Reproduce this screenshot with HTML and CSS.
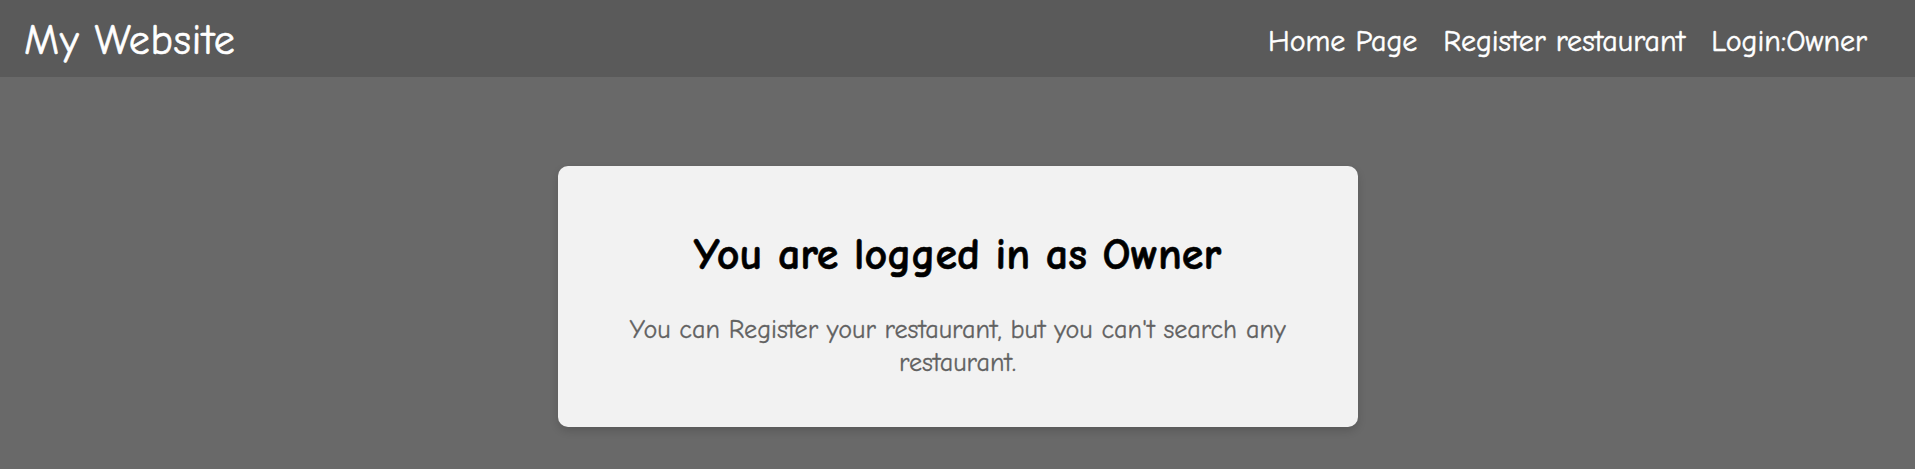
FILE: index.html
```html
<!DOCTYPE html>
<html lang="en">
<head>
<meta charset="utf-8">
<title>My Website</title>
<link rel="stylesheet" href="styles.css">
</head>
<body>
<header class="site-header">
  <div class="logo">My Website</div>
  <nav class="nav">
    <a class="nav-link" href="#">Home Page</a>
    <a class="nav-link" href="#">Register restaurant</a>
    <a class="nav-link" href="#">Login:Owner</a>
  </nav>
</header>
<main class="main">
  <section class="card">
    <h1 class="card-title">You are logged in as Owner</h1>
    <p class="card-text">You can Register your restaurant, but you can't search any restaurant.</p>
  </section>
</main>
</body>
</html>
```
FILE: styles.css
```css
html, body {
  margin: 0;
  padding: 0;
}
body {
  background: #696969;
  font-family: "Comic Sans MS", "Comic Neue", "Open Sans", sans-serif;
  min-height: 469px;
}
.site-header {
  height: 77px;
  box-sizing: border-box;
  background: #5a5a5a;
  display: flex;
  align-items: center;
  justify-content: space-between;
  padding: 5px 48px 0 24px;
}
.logo {
  color: #fff;
  font-size: 42px;
  line-height: 1;
  letter-spacing: 0.8px;
  -webkit-text-stroke: 0.6px #fff;
}
.nav {
  display: flex;
  gap: 26px;
}
.nav-link {
  color: #fff;
  text-decoration: none;
  font-size: 30px;
  -webkit-text-stroke: 0.5px #fff;
}
.main {
  display: flex;
  justify-content: center;
  padding-top: 89px;
}
.card {
  width: 800px;
  height: 261px;
  box-sizing: border-box;
  background: #f2f2f2;
  border-radius: 10px;
  box-shadow: 0 4px 8px rgba(0, 0, 0, 0.15);
  padding: 16px 40px 0;
  display: flex;
  flex-direction: column;
  align-items: center;
  justify-content: center;
  text-align: center;
}
.card-title {
  margin: 0 0 33px;
  font-size: 44px;
  line-height: 1.15;
  font-weight: bold;
  color: #000;
  -webkit-text-stroke: 0.6px #000;
}
.card-text {
  margin: 0;
  font-size: 26.2px;
  line-height: 33px;
  color: #616161;
  -webkit-text-stroke: 0.3px #616161;
}
```
